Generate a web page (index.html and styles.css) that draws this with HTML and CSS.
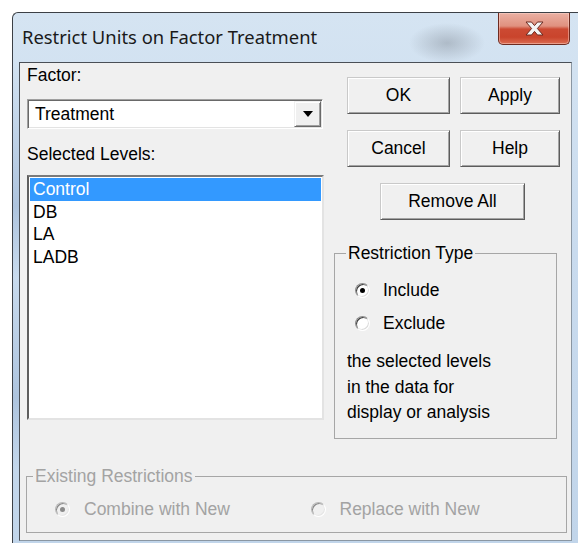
FILE: index.html
```html
<!DOCTYPE html>
<html lang="en">
<head>
<meta charset="utf-8">
<title>Restrict Units on Factor Treatment</title>
<link rel="stylesheet" href="styles.css">
</head>
<body>
<div class="window">
  <div class="titlebar">
    <span class="title">Restrict Units on Factor Treatment</span>
    <button class="close" type="button" aria-label="Close">
      <svg width="19" height="15" viewBox="0 0 19 15" aria-hidden="true">
        <path d="M1 1 H6.5 L9.5 4.6 L12.5 1 H18 L12.4 7.5 L18 14 H12.5 L9.5 10.4 L6.5 14 H1 L6.6 7.5 Z"
              fill="#f4f4f4" stroke="#6b2a20" stroke-width="1" stroke-linejoin="round"/>
      </svg>
    </button>
  </div>
  <div class="frame-body">
    <div class="client">
      <div class="top">
        <div class="left">
          <div class="lbl">Factor:</div>
          <div class="combo">
            <span class="combo-text">Treatment</span>
            <span class="combo-btn"><span class="tri"></span></span>
          </div>
          <div class="lbl lbl-levels">Selected Levels:</div>
          <ul class="listbox">
            <li class="sel">Control</li>
            <li>DB</li>
            <li>LA</li>
            <li>LADB</li>
          </ul>
        </div>
        <div class="right">
          <div class="btn-grid">
            <button class="btn" type="button">OK</button>
            <button class="btn" type="button">Apply</button>
            <button class="btn" type="button">Cancel</button>
            <button class="btn" type="button">Help</button>
          </div>
          <button class="btn btn-wide" type="button">Remove All</button>
          <fieldset class="group group-type">
            <legend>Restriction Type</legend>
            <div class="radio radio-first"><span class="rb on"></span>Include</div>
            <div class="radio radio-second"><span class="rb"></span>Exclude</div>
            <p class="note">the selected levels<br>in the data for<br>display or analysis</p>
          </fieldset>
        </div>
      </div>
      <fieldset class="group group-existing">
        <legend>Existing Restrictions</legend>
        <div class="opts">
          <div class="radio opt"><span class="rb on"></span>Combine with New</div>
          <div class="radio opt"><span class="rb"></span>Replace with New</div>
        </div>
      </fieldset>
    </div>
  </div>
</div>
</body>
</html>
```

FILE: styles.css
```css
* { box-sizing: border-box; }

html, body { margin: 0; }

body {
  width: 578px;
  height: 543px;
  overflow: hidden;
  background: #fff;
  font-family: "Liberation Sans", Arial, sans-serif;
  font-size: 17.5px;
  color: #000;
}

/* Aero glass frame */
.window {
  margin: 12px 0 0 12px;
  width: 566px;
  height: 531px;
  border-top: 1px solid #3c4046;
  border-left: 1px solid #3c4046;
  border-radius: 6px 0 0 0;
  background:
    radial-gradient(ellipse 38px 20px at 434px 30px, rgba(105, 112, 122, 0.35), transparent),
    linear-gradient(180deg, #d5e4f2 0%, #c9dbee 45%, #c1d5ea 100%);
}

.titlebar {
  height: 49px;
  display: flex;
  align-items: flex-start;
}

.title {
  margin: 14px 0 0 9px;
  font-family: "Noto Sans", "Open Sans", sans-serif;
  font-size: 18.4px;
  line-height: 20px;
  color: #1a1a1a;
}

.close {
  margin: 0 8px 0 auto;
  width: 72px;
  height: 32px;
  padding: 0;
  display: flex;
  align-items: center;
  justify-content: center;
  border: 1px solid #6e2b20;
  border-top: none;
  border-radius: 0 0 5px 5px;
  background: linear-gradient(180deg, #eab0a3 0%, #e0917f 42%, #cc4a33 52%, #c9442c 78%, #dc6d52 100%);
  box-shadow: inset 0 0 0 1px rgba(255, 220, 210, 0.45);
}

/* side strip of the frame, with the glass streaks */
.frame-body {
  padding-left: 6px;
  background:
    linear-gradient(180deg, transparent 0%, rgba(120, 150, 190, 0.35) 30%, transparent 45%,
                    rgba(120, 150, 190, 0.3) 70%, transparent 85%) 0 0 / 6px 100% no-repeat;
}

.client {
  width: 553px;
  height: 479px;
  background: #f0f0f0;
  border-top: 1px solid #4a4f56;
  border-left: 1px solid #4a4f56;
  border-right: 1px solid #8a96a2;
  border-bottom: 1px solid #8a96a2;
}

.top {
  display: grid;
  grid-template-columns: 304px 237px;
  column-gap: 10px;
}

/* left column: factor picker and level list */
.left { padding-left: 7px; }

.lbl {
  margin-top: 2px;
  line-height: 20px;
  height: 20px;
}

.lbl-levels { margin-top: 15px; }

.combo {
  margin-top: 14px;
  width: 296px;
  height: 30px;
  padding: 1px;
  display: flex;
  background: #fff;
  border: 1px solid;
  border-color: #a0a0a0 #ffffff #ffffff #a0a0a0;
  box-shadow: inset 1px 1px #696969, inset -1px -1px #e3e3e3;
}

.combo-text {
  flex: 1;
  padding-left: 6px;
  line-height: 26px;
}

.combo-btn {
  width: 27px;
  height: 26px;
  display: flex;
  align-items: center;
  justify-content: center;
  background: #f0f0f0;
  border: 1px solid;
  border-color: #f0f0f0 #696969 #696969 #f0f0f0;
  box-shadow: inset 1px 1px #fff, inset -1px -1px #a0a0a0;
}

.tri {
  width: 0;
  height: 0;
  border-left: 5px solid transparent;
  border-right: 5px solid transparent;
  border-top: 6px solid #000;
}

.listbox {
  margin: 11px 0 0;
  padding: 1px;
  list-style: none;
  width: 297px;
  height: 245px;
  background: #fff;
  border: 2px solid;
  border-color: #7a7a7a #e3e3e3 #e3e3e3 #5e5e5e;
}

.listbox li {
  line-height: 22.6px;
  padding-left: 3px;
}

.listbox .sel {
  background: #3399ff;
  color: #fff;
}

/* right column: command buttons and restriction type */
.btn-grid {
  margin: 14px 0 0 13px;
  display: grid;
  grid-template-columns: 103px 100px;
  column-gap: 10px;
  row-gap: 16px;
}

.btn {
  height: 37px;
  padding: 0;
  font: inherit;
  color: #000;
  background: #f0f0f0;
  border: 1px solid;
  border-color: #c9c9c9 #5c5c5c #5c5c5c #c9c9c9;
  box-shadow: inset 1px 1px #fff, inset -1px -1px #a3a3a3;
}

.btn-wide {
  display: block;
  width: 145px;
  margin: 16px 0 0 46px;
}

.group {
  margin: 0;
  padding: 0;
  min-width: 0;
  border: 1px solid #a6a6a6;
}

.group legend {
  padding: 0 2px;
  line-height: 20px;
}

.group-type {
  margin-top: 23px;
  width: 223px;
  height: 196px;
}

.group-type legend { margin-left: 11px; }

.radio {
  display: flex;
  align-items: center;
  height: 20px;
  gap: 13px;
}

.group-type .radio { padding-left: 20px; }
.radio-first { margin-top: 17px; }
.radio-second { margin-top: 13px; }

.rb {
  width: 15px;
  height: 15px;
  flex: none;
  display: flex;
  align-items: center;
  justify-content: center;
  border-radius: 50%;
  background: #fff;
  border: 1px solid;
  border-color: #8d8d8d #ffffff #ffffff #8d8d8d;
  box-shadow: inset 1px 1px #3f3f3f, inset -1px -1px #dcdcdc;
}

.rb.on::after {
  content: "";
  width: 5px;
  height: 5px;
  border-radius: 50%;
  background: #000;
}

.note {
  margin: 16px 0 0 12px;
  line-height: 25.5px;
}

/* disabled group along the bottom */
.group-existing {
  margin: 27px 0 0 6px;
  width: 541px;
  height: 67px;
  color: #a3a3a3;
}

.group-existing legend { margin-left: 6px; }

.opts {
  display: flex;
  margin-top: 13px;
  padding-left: 28px;
}

.opt {
  width: 256px;
  gap: 14px;
}

.group-existing .rb {
  background: #f0f0f0;
  border-color: #b9b9b9 #ffffff #ffffff #b9b9b9;
  box-shadow: inset 1px 1px #8a8a8a, inset -1px -1px #e6e6e6;
}

.group-existing .rb.on::after { background: #8a8a8a; }
```
